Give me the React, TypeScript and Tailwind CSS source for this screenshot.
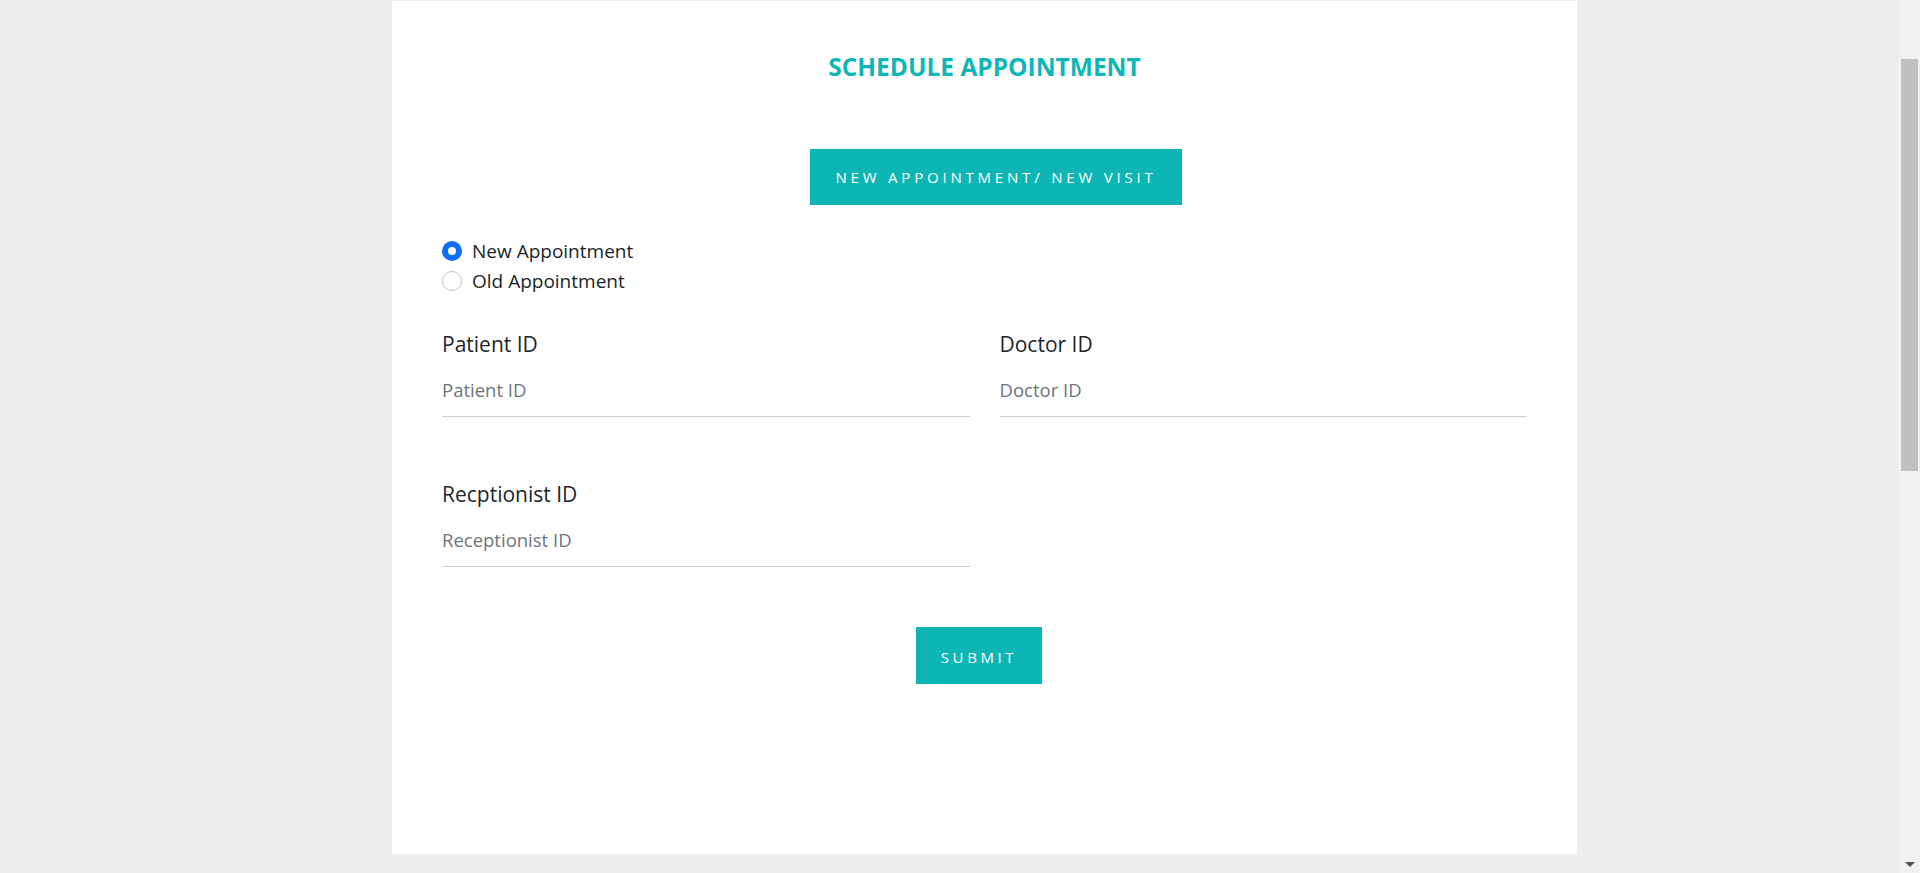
import React, { useState } from 'react';

const font = { fontFamily: '"Open Sans", "Noto Sans", sans-serif' };

const Field = ({ label, placeholder }: { label: string; placeholder: string }) => (
  <div className="flex flex-col">
    <label className="text-[21px] leading-[30px] text-[#212529]">{label}</label>
    <input
      placeholder={placeholder}
      className="mt-[11px] h-[47px] pb-[7px] w-full border-b border-[#cccccc] bg-transparent text-[18.5px] text-[#212529] outline-none placeholder:text-[#6c757d]"
    />
  </div>
);

const Radio = ({ checked, label, onClick }: { checked: boolean; label: string; onClick: () => void }) => (
  <button type="button" onClick={onClick} className="flex items-center h-[30px] gap-[10px] text-left">
    {checked ? (
      <span className="w-[20px] h-[20px] rounded-full bg-[#0d6efd] flex items-center justify-center">
        <span className="w-[8px] h-[8px] rounded-full bg-white" />
      </span>
    ) : (
      <span className="w-[20px] h-[20px] rounded-full border border-[#c4c4c4] bg-white" />
    )}
    <span className="text-[19px] text-[#212529]">{label}</span>
  </button>
);

export default function App() {
  const [mode, setMode] = useState<'new' | 'old'>('new');

  return (
    <div className="flex h-screen overflow-hidden bg-[#eeeeee]" style={font}>
      <div className="flex-1">
        <div className="ml-[392px] mt-px w-[1185px] bg-white px-[50px] pt-[50px] pb-[170px]">
          <h2 className="text-center text-[24.5px] leading-[32px] font-bold text-[#0fb6b5]">SCHEDULE APPOINTMENT</h2>

          <div className="mt-[66px] flex justify-center">
            <button className="ml-[23px] h-[56px] w-[372px] bg-[#0db6b5] text-white text-[15px] tracking-[3.8px] uppercase">
              New Appointment/ New Visit
            </button>
          </div>

          <div className="mt-[31px] flex flex-col">
            <Radio checked={mode === 'new'} label="New Appointment" onClick={() => setMode('new')} />
            <Radio checked={mode === 'old'} label="Old Appointment" onClick={() => setMode('old')} />
          </div>

          <div className="mt-[33px] grid grid-cols-2 gap-x-[30px]">
            <Field label="Patient ID" placeholder="Patient ID" />
            <Field label="Doctor ID" placeholder="Doctor ID" />
          </div>

          <div className="mt-[62px] grid grid-cols-2 gap-x-[30px]">
            <Field label="Recptionist ID" placeholder="Receptionist ID" />
          </div>

          <div className="mt-[60px] flex justify-center">
            <button className="mr-[11px] h-[57px] w-[126px] pt-[3px] bg-[#0db6b5] text-white text-[15px] tracking-[3.6px] uppercase">
              Submit
            </button>
          </div>
        </div>
      </div>

      {/* scrollbar strip */}
      <div className="w-[21px] h-full bg-[#f1f1f1] flex flex-col items-center">
        <div className="mt-[59px] h-[412px] w-[17px] bg-[#c1c1c1]" />
        <div className="flex-1" />
        <div className="mb-[6px] w-0 h-0 border-l-[5px] border-r-[5px] border-t-[5px] border-l-transparent border-r-transparent border-t-[#505050]" />
      </div>
    </div>
  );
}
